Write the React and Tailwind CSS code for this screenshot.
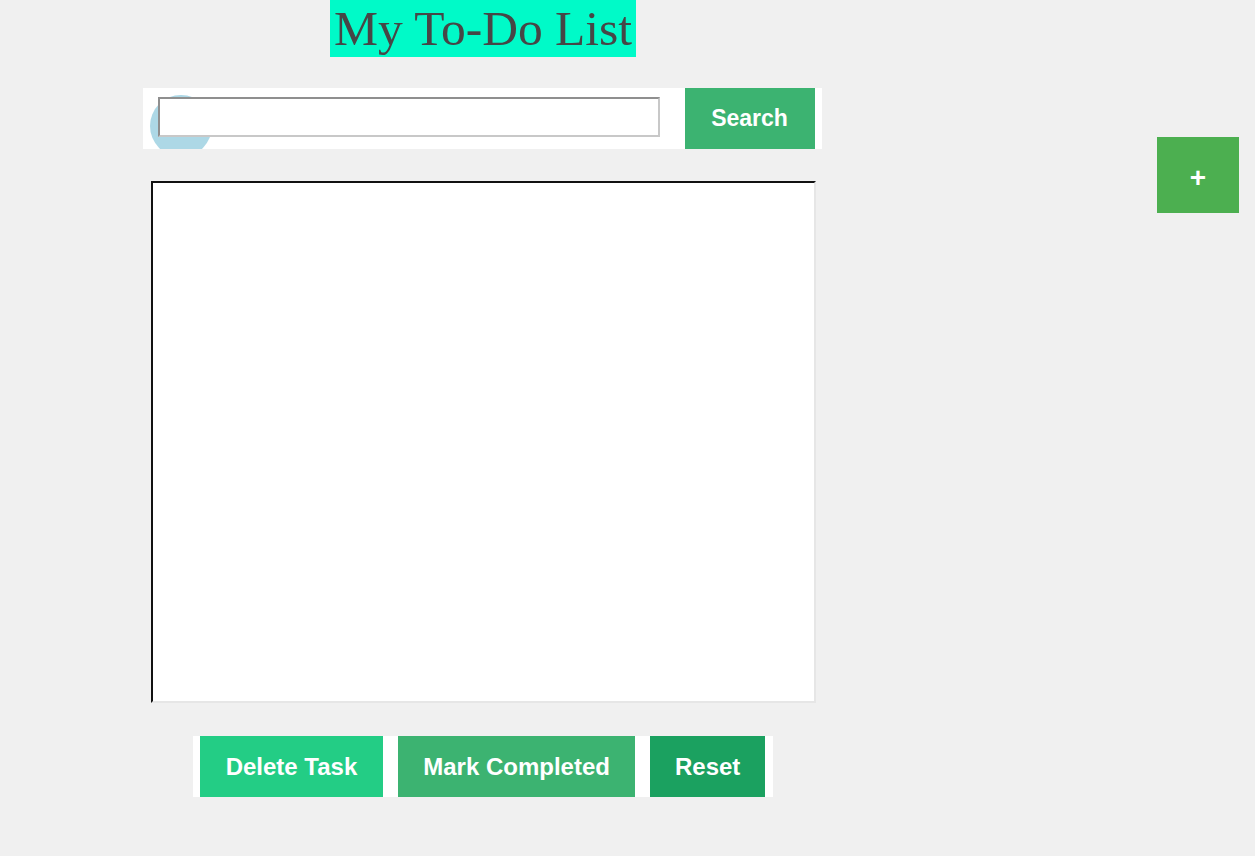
import React, { useState } from "react";

const App = () => {
  const [query, setQuery] = useState("");

  return (
    <div className="min-h-[856px] w-full bg-[#f0f0f0] relative font-['Liberation_Sans',Arial,sans-serif]">
      {/* main column */}
      <div className="w-[966px] flex flex-col items-center">
        <h1 className="bg-[#00fac8] text-[#464646] font-['Liberation_Serif','Times_New_Roman',serif] text-[49.5px] leading-[57px] h-[57px] px-[4px] font-normal">
          My To-Do List
        </h1>

        {/* search bar */}
        <div className="relative overflow-hidden bg-white mt-[31px] h-[61px] w-[679px] flex items-center pl-[15px] pr-[7px] gap-[25px] -translate-x-[1px]">
          <div className="absolute left-[7px] top-[7px] w-[62px] h-[62px] rounded-full bg-[#add8e6]"></div>
          <input
            type="text"
            value={query}
            onChange={(e) => setQuery(e.target.value)}
            className="relative w-[502px] h-[40px] mb-[3px] bg-white border-2 border-t-[#8f8f8f] border-l-[#8f8f8f] border-r-[#c8c8c8] border-b-[#c8c8c8] outline-none"
          />
          <button className="h-[61px] w-[130px] bg-[#3cb371] text-white font-bold text-[23px]">
            Search
          </button>
        </div>

        {/* task list */}
        <div className="mt-[32px] w-[665px] h-[522px] bg-white border-2 border-t-[#111] border-l-[#111] border-r-[#e6e6e6] border-b-[#e6e6e6]"></div>

        {/* actions */}
        <div className="mt-[33px] bg-white h-[61px] flex pl-[7px] pr-[8px] gap-[15px]">
          <button className="h-full px-[26px] bg-[#23cd85] text-white font-bold text-[24px]">
            Delete Task
          </button>
          <button className="h-full px-[25px] bg-[#3cb371] text-white font-bold text-[24px]">
            Mark Completed
          </button>
          <button className="h-full px-[25px] bg-[#1ba160] text-white font-bold text-[24px]">
            Reset
          </button>
        </div>
      </div>

      {/* floating add button */}
      <button className="absolute left-[1157px] top-[137px] w-[82px] h-[76px] pt-[5px] bg-[#4caf50] text-white font-bold text-[28px] leading-none">
        +
      </button>
    </div>
  );
};

export default App;
